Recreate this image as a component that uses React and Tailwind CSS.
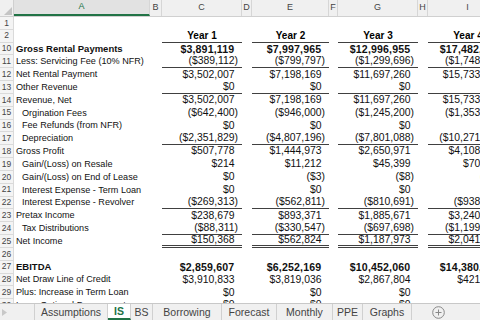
import React from 'react';

const GRID = "grid grid-cols-[14px_136px_12px_80px_10px_77px_9px_80px_10px_80px]";
const LETTERS = ['A', 'B', 'C', 'D', 'E', 'F', 'G', 'H', 'I'];

const rows = [
  { n: 1 },
  { n: 2, years: true },
  { n: 10, label: 'Gross Rental Payments', bold: true, vals: ['$3,891,119', '$7,997,965', '$12,996,955', '$17,482,613'] },
  { n: 11, label: 'Less: Servicing Fee (10% NFR)', line: 'single', vals: ['($389,112)', '($799,797)', '($1,299,696)', '($1,748,261)'] },
  { n: 12, label: 'Net Rental Payment', vals: ['$3,502,007', '$7,198,169', '$11,697,260', '$15,733,352'] },
  { n: 13, label: 'Other Revenue', line: 'single', vals: ['$0', '$0', '$0', '$0'] },
  { n: 14, label: 'Revenue, Net', vals: ['$3,502,007', '$7,198,169', '$11,697,260', '$15,733,352'] },
  { n: 15, label: 'Orgination Fees', indent: true, vals: ['($642,400)', '($946,000)', '($1,245,200)', '($1,353,600)'] },
  { n: 16, label: 'Fee Refunds (from NFR)', indent: true, vals: ['$0', '$0', '$0', '$0'] },
  { n: 17, label: 'Depreciation', indent: true, line: 'single', vals: ['($2,351,829)', '($4,807,196)', '($7,801,088)', '($10,271,036)'] },
  { n: 18, label: 'Gross Profit', vals: ['$507,778', '$1,444,973', '$2,650,971', '$4,108,716'] },
  { n: 19, label: 'Gain/(Loss) on Resale', indent: true, vals: ['$214', '$11,212', '$45,399', '$70,518'] },
  { n: 20, label: 'Gain/(Loss) on End of Lease', indent: true, vals: ['$0', '($3)', '($8)', '($12)'] },
  { n: 21, label: 'Interest Expense - Term Loan', indent: true, vals: ['$0', '$0', '$0', '$0'] },
  { n: 22, label: 'Interest Expense - Revolver', indent: true, line: 'single', vals: ['($269,313)', '($562,811)', '($810,691)', '($938,217)'] },
  { n: 23, label: 'Pretax Income', vals: ['$238,679', '$893,371', '$1,885,671', '$3,240,487'] },
  { n: 24, label: 'Tax Distributions', indent: true, line: 'single', vals: ['($88,311)', '($330,547)', '($697,698)', '($1,199,003)'] },
  { n: 25, label: 'Net Income', line: 'double', vals: ['$150,368', '$562,824', '$1,187,973', '$2,041,484'] },
  { n: 26 },
  { n: 27, label: 'EBITDA', bold: true, vals: ['$2,859,607', '$6,252,169', '$10,452,060', '$14,380,925'] },
  { n: 28, label: 'Net Draw Line of Credit', vals: ['$3,910,833', '$3,819,036', '$2,867,804', '$421,550'] },
  { n: 29, label: 'Plus: Increase in Term Loan', vals: ['$0', '$0', '$0', '$0'] },
  { n: 30, label: 'Less: Optional Prepayments', vals: ['$0', '$0', '$0', '$0'] },
];

// sheet tabs with the widths read off the screenshot
const tabs = [
  { name: 'Assumptions', w: 'w-[73px]' },
  { name: 'IS', w: 'w-[23px]' },
  { name: 'BS', w: 'w-[22px]' },
  { name: 'Borrowing', w: 'w-[69px]' },
  { name: 'Forecast', w: 'w-[55px]' },
  { name: 'Monthly', w: 'w-[56px]' },
  { name: 'PPE', w: 'w-[30px]' },
  { name: 'Graphs', w: 'w-[49px]' },
];

function NumCell({ value, bold, line }) {
  const lineCls =
    line === 'single' ? 'border-b border-[#404040]' :
    line === 'double' ? 'border-b-[3px] border-double border-[#404040]' : '';
  const neg = value && value.startsWith('(');
  return (
    <div className={`flex items-center justify-end pr-[4px] whitespace-nowrap text-[#111] ${bold ? 'font-bold text-[10.6px] tracking-[0.15px]' : 'text-[10.4px]'} ${lineCls}`}>
      {value}
      {value && !neg && <span className="invisible">)</span>}
    </div>
  );
}

function SheetRow({ row }) {
  const { n, label, indent, bold, vals, line, years } = row;
  return (
    <div className={`${GRID} h-[12.84px] leading-none`}>
      <div className="flex items-center justify-center bg-[#f4f4f4] border-r border-b border-[#dadada] text-[8.5px] text-[#444]">{n}</div>
      <div className={`flex items-center whitespace-nowrap text-[#111] ${indent ? 'pl-[8px]' : 'pl-[2px]'} ${bold ? 'font-bold text-[9.5px]' : 'text-[9.1px]'}`}>{label}</div>
      <div />
      {years ? (
        <>
          <div className="flex items-center justify-center font-bold text-[10px] border-b border-[#404040]">Year 1</div>
          <div />
          <div className="flex items-center justify-center font-bold text-[10px] border-b border-[#404040]">Year 2</div>
          <div />
          <div className="flex items-center justify-center font-bold text-[10px] border-b border-[#404040]">Year 3</div>
          <div />
          <div className="flex items-center justify-center font-bold text-[10px] border-b border-[#404040]">Year 4</div>
        </>
      ) : vals ? (
        <>
          <NumCell value={vals[0]} bold={bold} line={line} />
          <div />
          <NumCell value={vals[1]} bold={bold} line={line} />
          <div />
          <NumCell value={vals[2]} bold={bold} line={line} />
          <div />
          <NumCell value={vals[3]} bold={bold} line={line} />
        </>
      ) : null}
    </div>
  );
}

export default function App() {
  return (
    <div className="w-[480px] h-[320px] overflow-hidden bg-white flex flex-col font-['Liberation_Sans',Arial,sans-serif]">
      {/* Sheet */}
      <div className="h-[303px] overflow-hidden">
        <div className={`${GRID} h-[17px] bg-[#f0f0f0] border-b border-[#d0d0d0]`}>
          <div className="relative bg-[#f0f0f0] border-r border-[#d0d0d0]">
            <svg className="absolute right-[1px] bottom-[1px]" width="8" height="8" viewBox="0 0 8 8">
              <polygon points="8,0 8,8 0,8" fill="#c4c4c4" />
            </svg>
          </div>
          {LETTERS.map((l) => (
            <div
              key={l}
              className={`flex items-center justify-center text-[9px] border-r border-[#d6d6d6] ${l === 'A' ? 'bg-[#e2e2e2] text-[#217346] border-b-2 border-b-[#217346]' : 'text-[#444]'}`}
            >
              {l}
            </div>
          ))}
        </div>
        {rows.map((r) => (
          <SheetRow key={r.n} row={r} />
        ))}
      </div>

      {/* Sheet tabs */}
      <div className="h-[17px] flex items-stretch bg-[#f0f0f0] border-t border-[#c8c8c8] text-[10.5px] leading-none text-[#444]">
        <div className="w-[35px] flex items-center pl-[2px] border-r border-[#d0d0d0]">
          <svg width="5" height="7" viewBox="0 0 5 7">
            <polygon points="0,0 5,3.5 0,7" fill="#c8c8c8" />
          </svg>
        </div>
        {tabs.map((t) => (
          <div
            key={t.name}
            className={`${t.w} flex items-center justify-center border-r border-[#d0d0d0] whitespace-nowrap ${t.name === 'IS' ? 'bg-white text-[#217346] font-bold border-b-2 border-b-[#217346]' : ''}`}
          >
            {t.name}
          </div>
        ))}
        <div className="flex-1 flex items-center pl-[20px]">
          <svg width="13" height="13" viewBox="0 0 13 13">
            <circle cx="6.5" cy="6.5" r="5.8" fill="none" stroke="#888" strokeWidth="1" />
            <path d="M6.5 3.5v6M3.5 6.5h6" stroke="#888" strokeWidth="1" />
          </svg>
        </div>
      </div>
    </div>
  );
}
